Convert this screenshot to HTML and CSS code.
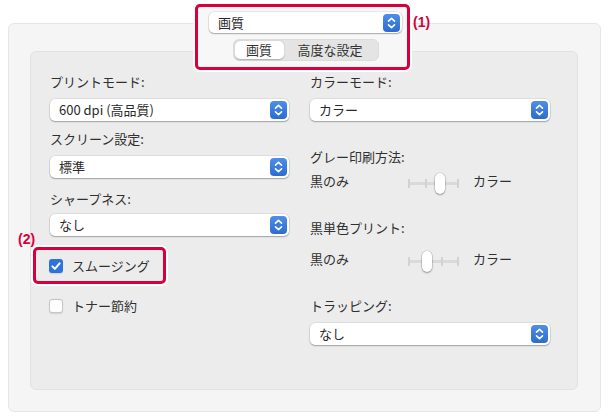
FILE: index.html
```html
<!DOCTYPE html>
<html lang="ja">

<head>
    <meta charset="UTF-8">
    <title>画質</title>
    <link rel="stylesheet" href="styles.css">
</head>

<body>
    <div class="sheet">
        <div class="quality-pick">
            <div class="popup popup-top">
                <span>画質</span>
                <span class="stepper"><svg width="17" height="18" viewBox="0 0 17 18"><path d="M5.5 7.2 8.5 4.4 11.5 7.2M5.5 10.8 8.5 13.6 11.5 10.8" fill="none" stroke="#fff" stroke-width="1.6" stroke-linecap="round" stroke-linejoin="round"/></svg></span>
            </div>
            <div class="segments">
                <span class="seg on">画質</span>
                <span class="seg">高度な設定</span>
            </div>
            <span class="tag tag-one">(1)</span>
        </div>

        <div class="panel">
            <!-- left column -->
            <div class="col">
                <div class="label">プリントモード:</div>
                <div class="popup">
                    <span>600 dpi (高品質)</span>
                    <span class="stepper"><svg width="17" height="18" viewBox="0 0 17 18"><path d="M5.5 7.2 8.5 4.4 11.5 7.2M5.5 10.8 8.5 13.6 11.5 10.8" fill="none" stroke="#fff" stroke-width="1.6" stroke-linecap="round" stroke-linejoin="round"/></svg></span>
                </div>
                <div class="label next">スクリーン設定:</div>
                <div class="popup">
                    <span>標準</span>
                    <span class="stepper"><svg width="17" height="18" viewBox="0 0 17 18"><path d="M5.5 7.2 8.5 4.4 11.5 7.2M5.5 10.8 8.5 13.6 11.5 10.8" fill="none" stroke="#fff" stroke-width="1.6" stroke-linecap="round" stroke-linejoin="round"/></svg></span>
                </div>
                <div class="label next sharp">シャープネス:</div>
                <div class="popup tight">
                    <span>なし</span>
                    <span class="stepper"><svg width="17" height="18" viewBox="0 0 17 18"><path d="M5.5 7.2 8.5 4.4 11.5 7.2M5.5 10.8 8.5 13.6 11.5 10.8" fill="none" stroke="#fff" stroke-width="1.6" stroke-linecap="round" stroke-linejoin="round"/></svg></span>
                </div>

                <div class="check smoothing">
                    <span class="tag tag-two">(2)</span>
                    <span class="box checked"><svg width="14" height="14" viewBox="0 0 14 14"><path d="M3.4 7.4 5.9 9.9 10.6 4.3" fill="none" stroke="#fff" stroke-width="2" stroke-linecap="round" stroke-linejoin="round"/></svg></span>
                    <span>スムージング</span>
                </div>
                <div class="check toner">
                    <span class="box"></span>
                    <span>トナー節約</span>
                </div>
            </div>

            <!-- right column -->
            <div class="col">
                <div class="label">カラーモード:</div>
                <div class="popup">
                    <span>カラー</span>
                    <span class="stepper"><svg width="17" height="18" viewBox="0 0 17 18"><path d="M5.5 7.2 8.5 4.4 11.5 7.2M5.5 10.8 8.5 13.6 11.5 10.8" fill="none" stroke="#fff" stroke-width="1.6" stroke-linecap="round" stroke-linejoin="round"/></svg></span>
                </div>
                <div class="label far">グレー印刷方法:</div>
                <div class="slider-row">
                    <span class="end">黒のみ</span>
                    <div class="slider">
                        <span class="track"></span>
                        <span class="tick t1"></span>
                        <span class="tick t2"></span>
                        <span class="tick t3"></span>
                        <span class="tick t4"></span>
                        <span class="thumb at-3"></span>
                    </div>
                    <span>カラー</span>
                </div>
                <div class="label far">黒単色プリント:</div>
                <div class="slider-row low">
                    <span class="end">黒のみ</span>
                    <div class="slider">
                        <span class="track"></span>
                        <span class="tick t1"></span>
                        <span class="tick t2"></span>
                        <span class="tick t3"></span>
                        <span class="tick t4"></span>
                        <span class="thumb at-2"></span>
                    </div>
                    <span>カラー</span>
                </div>
                <div class="label far">トラッピング:</div>
                <div class="popup">
                    <span>なし</span>
                    <span class="stepper"><svg width="17" height="18" viewBox="0 0 17 18"><path d="M5.5 7.2 8.5 4.4 11.5 7.2M5.5 10.8 8.5 13.6 11.5 10.8" fill="none" stroke="#fff" stroke-width="1.6" stroke-linecap="round" stroke-linejoin="round"/></svg></span>
                </div>
            </div>
        </div>
    </div>
</body>

</html>
```

FILE: styles.css
```css
body {
    margin: 0;
    background-color: #ffffff;
    font-family: "Noto Sans CJK JP", "Noto Sans", sans-serif;
    font-size: 13px;
    line-height: 16px;
    color: #303030;
}

.sheet {
    position: relative;
    box-sizing: border-box;
    width: 593px;
    height: 389px;
    margin: 23px 12px 0 8px;
    padding: 27px 22px 21px 21px;
    display: flex;
    background-color: #f5f5f5;
    border: 1px solid #e6e6e6;
    border-radius: 6px;
}

/* annotated box round the top popup */
.quality-pick {
    position: absolute;
    top: -20px;
    left: 186px;
    box-sizing: border-box;
    width: 215px;
    height: 66px;
    padding: 5px 5px 0 11px;
    display: flex;
    flex-direction: column;
    background-color: #f7f7f7;
    border: 3px solid #d8003a;
    border-radius: 5px;
    box-shadow: 0 0 0 2px #ffffff;
    z-index: 2;
}

.tag {
    position: absolute;
    font-family: "Liberation Sans", Arial, sans-serif;
    font-weight: bold;
    font-size: 14px;
    line-height: 16px;
    color: #d8003a;
}

.tag-one {
    top: 7px;
    left: 215px;
}

.tag-two {
    top: -19px;
    left: -18px;
}

.panel {
    flex: 1;
    box-sizing: border-box;
    padding: 22px 0 0 19px;
    display: grid;
    grid-template-columns: 239px 240px;
    column-gap: 21px;
    align-content: start;
    background-color: #ececec;
    border: 1px solid #e2e2e2;
    border-radius: 6px;
}

.col {
    display: flex;
    flex-direction: column;
    align-items: flex-start;
}

.label.next {
    margin-top: 10px;
}

.label.sharp {
    margin-top: 13px;
}

.label.far {
    margin-top: 28px;
}

.popup {
    box-sizing: border-box;
    width: 100%;
    height: 22px;
    margin-top: 9px;
    padding: 0 2px 0 9px;
    display: flex;
    align-items: center;
    justify-content: space-between;
    background-color: #ffffff;
    border-radius: 5px;
    box-shadow: 0 0 0 0.5px rgba(0, 0, 0, 0.12), 0 1px 1.5px rgba(0, 0, 0, 0.28);
    color: #2a2a2a;
}

.popup.tight {
    margin-top: 7px;
}

.popup-top {
    width: 193px;
    height: 21px;
    margin-top: 0;
}

.stepper {
    display: flex;
    width: 17px;
    height: 18px;
    border-radius: 4px;
    background: linear-gradient(#4e8fe8, #2c6ccf);
}

.segments {
    align-self: center;
    display: flex;
    box-sizing: border-box;
    width: 146px;
    height: 22px;
    margin-top: 6px;
    padding: 1px;
    background-color: #e4e4e4;
    border: 1px solid #dcdcdc;
    border-radius: 6px;
}

.seg {
    flex: 1;
    display: flex;
    align-items: center;
    justify-content: center;
    color: #333;
}

.seg.on {
    flex: 0 0 49px;
    background-color: #ffffff;
    border-radius: 5px;
    box-shadow: 0 0.5px 1.5px rgba(0, 0, 0, 0.25);
}

.check {
    display: flex;
    align-items: center;
    gap: 9px;
}

.smoothing {
    position: relative;
    box-sizing: border-box;
    width: 133px;
    height: 37px;
    margin: 11px 0 0 -17px;
    padding-left: 13px;
    border: 3px solid #d8003a;
    border-radius: 5px;
    box-shadow: 0 0 0 2px #ffffff;
}

.toner {
    margin: 14px 0 0 -1px;
}

.box {
    box-sizing: border-box;
    width: 14px;
    height: 14px;
    border-radius: 3px;
    background-color: #ffffff;
    border: 1px solid #c6c6c6;
    box-shadow: 0 0.5px 1px rgba(0, 0, 0, 0.12);
}

.box.checked {
    display: flex;
    background-color: #2f72d8;
    border: none;
}

.slider-row {
    display: flex;
    align-items: center;
    height: 22px;
    margin-top: 5px;
}

.slider-row.low {
    margin-top: 12px;
}

.slider-row .end {
    width: 98px;
}

.slider {
    position: relative;
    width: 51px;
    height: 22px;
    margin-right: 14px;
}

.track {
    position: absolute;
    left: 0;
    right: 0;
    top: 12px;
    height: 3px;
    background-color: #dadada;
}

.tick {
    position: absolute;
    top: 9px;
    width: 2px;
    height: 9px;
    background-color: #d2d2d2;
}

.t1 { left: 0; }
.t2 { left: 17px; }
.t3 { left: 33px; }
.t4 { left: 49px; }

.thumb {
    position: absolute;
    top: 3px;
    width: 10px;
    height: 21px;
    border-radius: 5px;
    background-color: #ffffff;
    box-shadow: 0 0 0 0.5px rgba(0, 0, 0, 0.18), 0 1px 2px rgba(0, 0, 0, 0.3);
}

.thumb.at-3 {
    left: 27px;
}

.thumb.at-2 {
    left: 14px;
}
```
